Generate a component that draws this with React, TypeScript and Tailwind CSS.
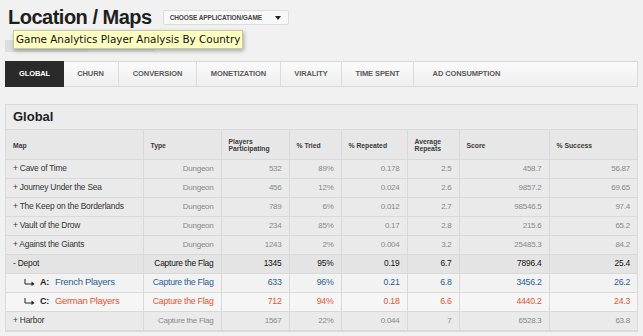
type Row = {
	map: string;
	type: string;
	players: string;
	tried: string;
	repeated: string;
	avg: string;
	score: string;
	success: string;
	kind: "plain" | "open" | "blue" | "red";
	prefix?: string;
};

const rows: Row[] = [
	{ map: "+ Cave of Time", type: "Dungeon", players: "532", tried: "89%", repeated: "0.178", avg: "2.5", score: "458.7", success: "56.87", kind: "plain" },
	{ map: "+ Journey Under the Sea", type: "Dungeon", players: "456", tried: "12%", repeated: "0.024", avg: "2.6", score: "9857.2", success: "69.65", kind: "plain" },
	{ map: "+ The Keep on the Borderlands", type: "Dungeon", players: "789", tried: "6%", repeated: "0.012", avg: "2.7", score: "98546.5", success: "97.4", kind: "plain" },
	{ map: "+ Vault of the Drow", type: "Dungeon", players: "234", tried: "85%", repeated: "0.17", avg: "2.8", score: "215.6", success: "65.2", kind: "plain" },
	{ map: "+ Against the Giants", type: "Dungeon", players: "1243", tried: "2%", repeated: "0.004", avg: "3.2", score: "25485.3", success: "84.2", kind: "plain" },
	{ map: "- Depot", type: "Capture the Flag", players: "1345", tried: "95%", repeated: "0.19", avg: "6.7", score: "7896.4", success: "25.4", kind: "open" },
	{ map: "French Players", prefix: "A:", type: "Capture the Flag", players: "633", tried: "96%", repeated: "0.21", avg: "6.8", score: "3456.2", success: "26.2", kind: "blue" },
	{ map: "German Players", prefix: "C:", type: "Capture the Flag", players: "712", tried: "94%", repeated: "0.18", avg: "6.6", score: "4440.2", success: "24.3", kind: "red" },
	{ map: "+ Harbor", type: "Capture the Flag", players: "1567", tried: "22%", repeated: "0.044", avg: "7", score: "6528.3", success: "63.8", kind: "plain" },
];

const tabs = [
	{ label: "GLOBAL", w: "w-[59px]" },
	{ label: "CHURN", w: "w-[56px]" },
	{ label: "CONVERSION", w: "w-[78px]" },
	{ label: "MONETIZATION", w: "w-[84px]" },
	{ label: "VIRALITY", w: "w-[61px]" },
	{ label: "TIME SPENT", w: "w-[72px]" },
	{ label: "AD CONSUMPTION", w: "w-[105px]" },
];

const rowStyle = {
	plain: {
		bg: "bg-[#eaeaea]",
		map: "text-[#333] text-[8.4px] tracking-[-0.2px]",
		cell: "text-[#888] text-[8px] tracking-[-0.25px]",
	},
	open: {
		bg: "bg-[#e4e4e4]",
		map: "text-[#222] text-[8.4px] tracking-[-0.2px]",
		cell: "text-[#111] text-[8.4px] tracking-[-0.2px]",
	},
	blue: {
		bg: "bg-[#f2f2f2]",
		map: "text-[#2f5f93] text-[9.5px] tracking-[-0.3px]",
		cell: "text-[#2f5f93] text-[8.8px] tracking-[-0.3px]",
	},
	red: {
		bg: "bg-[#f6f6f6]",
		map: "text-[#ec5530] text-[9.5px] tracking-[-0.3px]",
		cell: "text-[#ec5530] text-[8.8px] tracking-[-0.3px]",
	},
};

function SubArrow() {
	return (
		<svg width="11" height="7" viewBox="0 0 11 7" className="mr-[5px] shrink-0">
			<path d="M1 0 V5 H8" stroke="#222" strokeWidth="1" fill="none" />
			<path d="M7.5 2.5 L10.5 5 L7.5 7 Z" fill="#222" />
		</svg>
	);
}

export default function App() {
	const cellBase = "h-[19px] whitespace-nowrap border-b border-r border-[#d9d9d9] px-[7px] align-middle";
	return (
		<div className="relative h-[336px] w-[643px] overflow-hidden bg-[#f1f1f1] font-['Liberation_Sans',Arial,sans-serif]">
			<div className="flex items-center px-[8px] pt-[5px]">
				<h1 className="text-[20px] font-bold leading-[24px] tracking-[-0.5px] text-[#1e1e1e]">Location / Maps</h1>
				<button className="ml-[11px] mt-[1px] flex h-[15px] w-[126px] items-center justify-between rounded-[2px] border border-[#dcdcdc] bg-[#f8f8f8] pl-[6px] pr-[7px]">
					<span className="text-[6.5px] font-bold tracking-[-0.1px] text-[#444]">CHOOSE APPLICATION/GAME</span>
					<svg width="6" height="4" viewBox="0 0 6 4">
						<path d="M0 0 H6 L3 4 Z" fill="#222" />
					</svg>
				</button>
			</div>

			<div className="ml-[5px] mt-[11px] flex h-[12px]">
				<div className="w-[83px] bg-[#dedede]" />
				<div className="w-[67px] bg-[#e6e6e6]" />
			</div>

			<div className="absolute left-[13px] top-[30px] flex h-[19px] w-[230px] items-center border border-[#c9c9a0] bg-[#ffffc2] pl-[2px] shadow-[1px_2px_4px_rgba(0,0,0,0.3)]">
				<span className="whitespace-nowrap font-['DejaVu_Sans',sans-serif] text-[10.4px] text-[#111]">
					Game Analytics Player Analysis By Country
				</span>
			</div>

			<div className="mx-[5px] mt-[9px] flex h-[26px] border border-[#dadada] bg-gradient-to-b from-[#fbfbfb] to-[#efefef]">
				{tabs.map((t, i) => (
					<div
						key={t.label}
						className={`${t.w} flex items-center justify-center text-[7.5px] font-bold tracking-[-0.1px] ${
							i === 0
								? "-m-px h-[26px] bg-[#2a2a2a] text-white"
								: i < tabs.length - 1
									? "border-r border-[#dcdcdc] text-[#5a5a5a]"
									: "text-[#5a5a5a]"
						}`}
					>
						{t.label}
					</div>
				))}
			</div>

			<div className="mx-[5px] mt-[17px] border border-[#dadada] bg-[#ececec]">
				<div className="flex h-[25px] items-center border-b border-[#dadada] px-[7px] text-[13px] font-bold text-[#1e1e1e]">
					Global
				</div>
				<table className="w-full table-fixed border-collapse">
					<colgroup>
						<col className="w-[137px]" />
						<col className="w-[78px]" />
						<col className="w-[68px]" />
						<col className="w-[52px]" />
						<col className="w-[66px]" />
						<col className="w-[52px]" />
						<col className="w-[90px]" />
						<col />
					</colgroup>
					<thead>
						<tr className="h-[29px] bg-[#e7e7e7] text-left text-[6.8px] font-bold leading-[7px] text-[#3a3a3a]">
							{["Map", "Type", "Players Participating", "% Tried", "% Repeated", "Average Repeats", "Score", "% Success"].map(
								(h, i) => (
									<th
										key={h}
										className={`border-b border-[#d9d9d9] px-[7px] pt-[2px] align-middle font-bold ${i < 7 ? "border-r" : ""}`}
									>
										{h === "Players Participating" ? (
											<>
												Players
												<br />
												Participating
											</>
										) : h === "Average Repeats" ? (
											<>
												Average
												<br />
												Repeats
											</>
										) : (
											h
										)}
									</th>
								),
							)}
						</tr>
					</thead>
					<tbody>
						{rows.map((r) => {
							const s = rowStyle[r.kind];
							return (
								<tr key={r.map} className={s.bg}>
									<td className={`${cellBase} text-left ${s.map}`}>
										{r.prefix ? (
											<span className="flex items-center pl-[11px]">
												<SubArrow />
												<span className="mr-[6px] text-[9px] font-bold text-[#222]">{r.prefix}</span>
												{r.map}
											</span>
										) : (
											r.map
										)}
									</td>
									<td className={`${cellBase} text-right ${s.cell}`}>{r.type}</td>
									<td className={`${cellBase} text-right ${s.cell}`}>{r.players}</td>
									<td className={`${cellBase} text-right ${s.cell}`}>{r.tried}</td>
									<td className={`${cellBase} text-right ${s.cell}`}>{r.repeated}</td>
									<td className={`${cellBase} text-right ${s.cell}`}>{r.avg}</td>
									<td className={`${cellBase} text-right ${s.cell}`}>{r.score}</td>
									<td className={`${cellBase} border-r-0 text-right ${s.cell}`}>{r.success}</td>
								</tr>
							);
						})}
					</tbody>
				</table>
			</div>
		</div>
	);
}
